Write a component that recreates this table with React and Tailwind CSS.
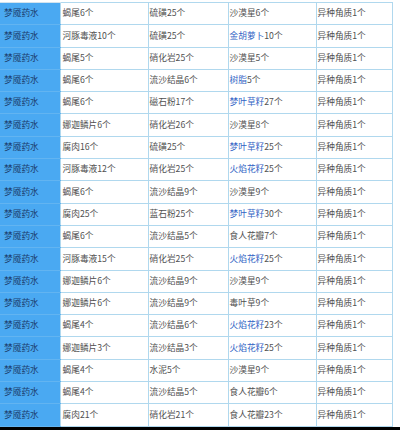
const ROWS = [
  ['蝎尾6个', '硫磺25个', '沙漠星6个'],
  ['河豚毒液10个', '硫磺25个', ['金胡萝卜', '10个']],
  ['蝎尾5个', '硝化岩25个', '沙漠星5个'],
  ['蝎尾6个', '流沙结晶6个', ['树脂', '5个']],
  ['蝎尾6个', '磁石粉17个', ['梦叶草籽', '27个']],
  ['娜迦鳞片6个', '硝化岩26个', '沙漠星8个'],
  ['腐肉16个', '硫磺25个', ['梦叶草籽', '25个']],
  ['河豚毒液12个', '硝化岩25个', ['火焰花籽', '25个']],
  ['蝎尾6个', '流沙结晶9个', '沙漠星9个'],
  ['腐肉25个', '蓝石粉25个', ['梦叶草籽', '30个']],
  ['蝎尾6个', '流沙结晶5个', '食人花瓣7个'],
  ['河豚毒液15个', '硝化岩25个', ['火焰花籽', '25个']],
  ['娜迦鳞片6个', '流沙结晶9个', '沙漠星9个'],
  ['娜迦鳞片6个', '流沙结晶9个', '毒叶草9个'],
  ['蝎尾4个', '流沙结晶6个', ['火焰花籽', '23个']],
  ['娜迦鳞片3个', '流沙结晶3个', ['火焰花籽', '25个']],
  ['蝎尾4个', '水泥5个', '沙漠星9个'],
  ['蝎尾4个', '流沙结晶5个', '食人花瓣6个'],
  ['腐肉21个', '硝化岩21个', '食人花瓣23个'],
];

// linked item names are blue, count stays grey
function Cell({ value }) {
  if (Array.isArray(value)) {
    return (
      <>
        <span className="text-[#2f62c4]">{value[0]}</span>
        {value[1]}
      </>
    );
  }
  return value;
}

export default function App() {
  return (
    <div
      className="w-[400px] h-[430px] bg-white overflow-hidden pt-[2px] relative"
      style={{ fontFamily: '"Noto Sans CJK SC", "Liberation Sans", sans-serif' }}
    >
      <table className="border-collapse table-fixed w-[392px] text-[8.7px] text-[#505050] leading-none">
        <colgroup>
          <col className="w-[60px]" />
          <col className="w-[88px]" />
          <col className="w-[80px]" />
          <col className="w-[88px]" />
          <col className="w-[76px]" />
        </colgroup>
        <tbody>
          {ROWS.map((r, i) => (
            <tr key={i} className="h-[22.3px]">
              <td className="bg-[#4aa9f2] text-[#1d3f6e] pl-[4px] border-t border-t-[#d2e3ee] border-b border-b-[#62b4f1] whitespace-nowrap">
                梦魇药水
              </td>
              <td className="border border-[#b0d8ee] pl-[2px] whitespace-nowrap">{r[0]}</td>
              <td className="border border-[#b0d8ee] pl-[1px] whitespace-nowrap">{r[1]}</td>
              <td className="border border-[#b0d8ee] pl-[1px] whitespace-nowrap"><Cell value={r[2]} /></td>
              <td className="border border-[#b0d8ee] pl-[1px] whitespace-nowrap">异种角质1个</td>
            </tr>
          ))}
        </tbody>
      </table>
      <div className="absolute left-0 right-0 bottom-0 h-[3px] bg-black" />
    </div>
  );
}
